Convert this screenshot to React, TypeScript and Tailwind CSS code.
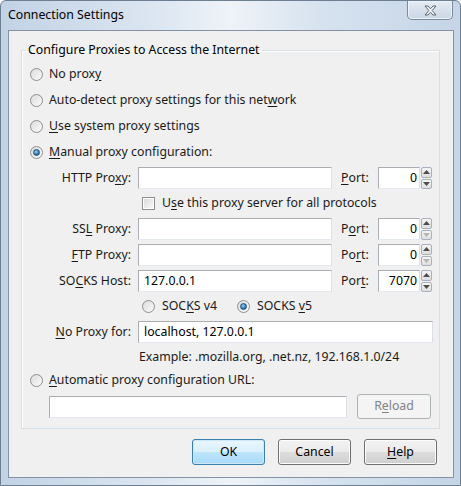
const font = { fontFamily: '"Noto Sans", "Liberation Sans", sans-serif' };

const U = ({ children }: { children: string }) => (
  <span className="underline underline-offset-[2px] decoration-1">{children}</span>
);

const Radio = ({ checked = false }: { checked?: boolean }) => (
  <span className="flex h-[13px] w-[13px] shrink-0 items-center justify-center rounded-full border border-[#8e8f8f] bg-gradient-to-br from-[#dcdcdc] to-[#fbfbfb]">
    {checked && (
      <span className="h-[7px] w-[7px] rounded-full border border-[#1d4f7e] bg-[radial-gradient(circle_at_40%_35%,#9fd0f4,#2f75b5_60%,#1b4d80)]" />
    )}
  </span>
);

const Checkbox = () => (
  <span className="flex h-[13px] w-[13px] shrink-0 items-center justify-center border border-[#8e8f8f] bg-white">
    <span className="h-[9px] w-[9px] bg-gradient-to-br from-[#dcdcdc] to-[#f8f8f8]" />
  </span>
);

const TextBox = ({ className, value = "", right = false }: { className: string; value?: string; right?: boolean }) => (
  <div
    className={`flex h-[22px] items-center border border-[#abadb3] border-b-[#e3e9ef] border-r-[#dbdfe6] bg-white text-black ${
      right ? "justify-end pl-[4px] pr-[2px]" : "px-[5px]"
    } ${className}`}
  >
    {value}
  </div>
);

const Arrow = ({ up, dim }: { up: boolean; dim: boolean }) => (
  <svg width="7" height="4" viewBox="0 0 7 4">
    <path d={up ? "M0 4 L3.5 0 L7 4 Z" : "M0 0 L3.5 4 L7 0 Z"} fill={dim ? "#b5b5b5" : "#4d4d4d"} />
  </svg>
);

const Spinner = ({ dimDown = false }: { dimDown?: boolean }) => (
  <div className="ml-[1px] flex h-[22px] w-[11px] flex-col gap-[1px]">
    <div className="flex flex-1 items-center justify-center rounded-[2px] border border-[#a8b0bb] bg-gradient-to-b from-[#f5f5f5] to-[#dedede]">
      <Arrow up dim={false} />
    </div>
    <div className="flex flex-1 items-center justify-center rounded-[2px] border border-[#a8b0bb] bg-gradient-to-b from-[#f5f5f5] to-[#dedede]">
      <Arrow up={false} dim={dimDown} />
    </div>
  </div>
);

const ProxyRow = ({
  label,
  port,
  host = "",
  portValue,
  dimDown = false,
  className,
}: {
  label: React.ReactNode;
  port: React.ReactNode;
  host?: string;
  portValue: string;
  dimDown?: boolean;
  className: string;
}) => (
  <div className={`flex h-[22px] items-center ${className}`}>
    <div className="w-[109px] text-right">{label}</div>
    <TextBox className="ml-[7px] w-[194px]" value={host} />
    <div className="ml-[9px] w-[37px]">{port}</div>
    <TextBox className="w-[42px]" value={portValue} right />
    <Spinner dimDown={dimDown} />
  </div>
);

const Button = ({ children, def = false, disabled = false, className = "" }: { children: React.ReactNode; def?: boolean; disabled?: boolean; className?: string }) => (
  <div
    className={`flex items-center justify-center rounded-[3px] border ${
      disabled
        ? "border-[#adb2b5] bg-[#f4f4f4] text-[#838383]"
        : def
        ? "border-[#3c7fb1] bg-[linear-gradient(#eaf6fd_0%,#d9f0fc_50%,#bee6fd_51%,#a7d9f5_100%)] text-black shadow-[inset_0_0_0_1px_#cde8f8]"
        : "border-[#707070] bg-[linear-gradient(#f2f2f2_0%,#ebebeb_50%,#dddddd_51%,#cfcfcf_100%)] text-black shadow-[inset_0_0_0_1px_#fcfcfc]"
    } ${className}`}
  >
    {children}
  </div>
);

export default function App() {
  return (
    <div
      className="flex h-[486px] w-[461px] flex-col overflow-hidden rounded-t-[6px] border border-[#6f7f92] bg-[linear-gradient(90deg,#c2d2e5_0%,#dde7f2_35%,#eef3f8_50%,#d6e2ef_70%,#c5d5e7_100%)] text-[12.3px] text-[#1a1a1a]"
      style={font}
    >
      <div className="flex h-[29px] shrink-0 items-start justify-between">
        <div className="pl-[7px] pt-[6px] leading-[16px] text-black">Connection Settings</div>
        <div className="mr-[7px] flex h-[19px] w-[46px] items-center justify-center rounded-b-[5px] border border-t-0 border-[#7c8a9c] bg-gradient-to-b from-[#e4ebf4] to-[#cbd7e5] shadow-[inset_0_0_0_1px_#eef3f9]">
          <svg width="13" height="11" viewBox="0 0 13 11">
            <path
              d="M1 1 H4 L6.5 3.8 L9 1 H12 L8.2 5.5 L12 10 H9 L6.5 7.2 L4 10 H1 L4.8 5.5 Z"
              fill="#f4f6f8"
              stroke="#5a6470"
              strokeWidth="1"
            />
          </svg>
        </div>
      </div>

      <div className="ml-[7px] flex h-[448px] w-[446px] flex-col border border-[#8392a4] bg-[#f0f0f0]">
        <fieldset className="ml-[12px] mt-[11px] w-[419px] border border-[#d5dfe5] px-0 pb-[9px] shadow-[inset_1px_1px_0_#ffffff]">
          <legend className="ml-[4px] px-[2px] leading-[16px] text-black">Configure Proxies to Access the Internet</legend>
          <div className="flex flex-col pt-[3px]">
            <div className="flex h-[26px] items-center gap-[6px] pl-[8px]">
              <Radio />
              <span>
                No prox<U>y</U>
              </span>
            </div>
            <div className="flex h-[26px] items-center gap-[6px] pl-[8px]">
              <Radio />
              <span>
                Auto-detect proxy settings for this net<U>w</U>ork
              </span>
            </div>
            <div className="flex h-[26px] items-center gap-[6px] pl-[8px]">
              <Radio />
              <span>
                <U>U</U>se system proxy settings
              </span>
            </div>
            <div className="flex h-[26px] items-center gap-[6px] pl-[8px]">
              <Radio checked />
              <span>
                <U>M</U>anual proxy configuration:
              </span>
            </div>

            <ProxyRow
              className="mt-[2px]"
              label={
                <>
                  HTTP Pro<U>x</U>y:
                </>
              }
              port={
                <>
                  <U>P</U>ort:
                </>
              }
              portValue="0"
            />
            <div className="mt-[1px] flex h-[26px] items-center gap-[7px] pl-[120px]">
              <Checkbox />
              <span>
                U<U>s</U>e this proxy server for all protocols
              </span>
            </div>
            <ProxyRow
              className="mt-[2px]"
              label={
                <>
                  SS<U>L</U> Proxy:
                </>
              }
              port={
                <>
                  P<U>o</U>rt:
                </>
              }
              portValue="0"
              dimDown
            />
            <ProxyRow
              className="mt-[4px]"
              label={
                <>
                  <U>F</U>TP Proxy:
                </>
              }
              port={
                <>
                  Po<U>r</U>t:
                </>
              }
              portValue="0"
              dimDown
            />
            <ProxyRow
              className="mt-[4px]"
              label={
                <>
                  SO<U>C</U>KS Host:
                </>
              }
              port={
                <>
                  Por<U>t</U>:
                </>
              }
              host="127.0.0.1"
              portValue="7070"
            />
            <div className="mt-[1px] flex h-[26px] items-center pl-[120px]">
              <Radio />
              <span className="ml-[7px]">
                SOC<U>K</U>S v4
              </span>
              <span className="ml-[20px]">
                <Radio checked />
              </span>
              <span className="ml-[7px]">
                SOCKS <U>v</U>5
              </span>
            </div>
            <div className="mt-[2px] flex h-[22px] items-center">
              <div className="w-[109px] text-right">
                <U>N</U>o Proxy for:
              </div>
              <TextBox className="ml-[7px] w-[295px]" value="localhost, 127.0.0.1" />
            </div>
            <div className="mt-[2px] flex h-[24px] items-center pl-[117px]">
              Example: .mozilla.org, .net.nz, 192.168.1.0/24
            </div>
            <div className="flex h-[22px] items-center gap-[6px] pl-[8px]">
              <Radio />
              <span>
                <U>A</U>utomatic proxy configuration URL:
              </span>
            </div>
            <div className="mt-[3px] flex h-[25px] items-center pl-[27px]">
              <TextBox className="h-[21px] w-[298px]" />
              <Button disabled className="ml-[10px] h-[25px] w-[74px]">
                <span>
                  R<U>e</U>load
                </span>
              </Button>
            </div>
          </div>
        </fieldset>

        <div className="mt-[10px] flex justify-end gap-[13px] pr-[16px]">
          <Button def className="h-[26px] w-[73px]">
            OK
          </Button>
          <Button className="h-[26px] w-[73px]">Cancel</Button>
          <Button className="h-[26px] w-[73px]">
            <span>
              <U>H</U>elp
            </span>
          </Button>
        </div>
      </div>
    </div>
  );
}
